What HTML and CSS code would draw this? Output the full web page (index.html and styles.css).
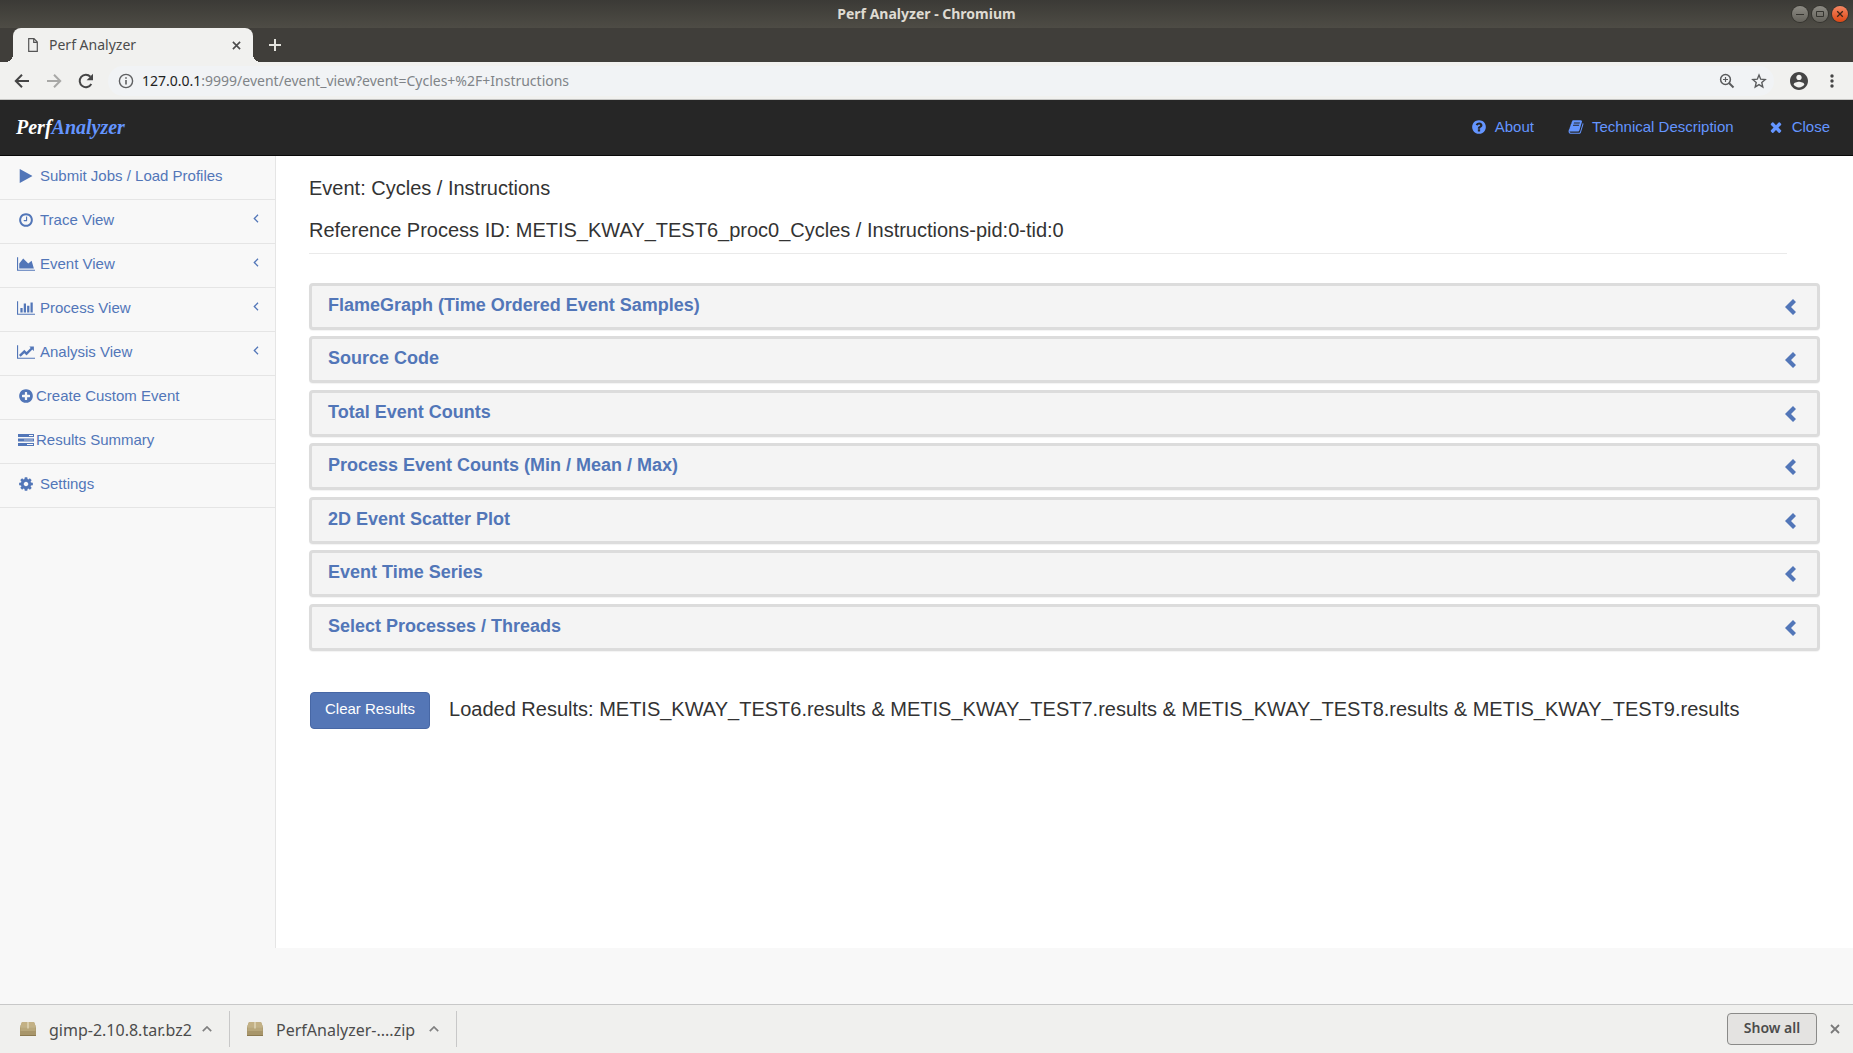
FILE: index.html
```html
<!DOCTYPE html>
<html lang="en">
<head>
<meta charset="utf-8">
<title>Perf Analyzer</title>
<link rel="stylesheet" href="styles.css">
</head>
<body>
<svg class="defs" aria-hidden="true">
  <symbol id="chevron" viewBox="0 0 11 16"><path d="M8 0l3 3-5 5 5 5-3 3-8-8z" fill="currentColor"/></symbol>
  <symbol id="angle" viewBox="0 0 6 9"><path d="M5 .7L1.300 4.500 5 8.300" fill="none" stroke="currentColor" stroke-width="1.300"/></symbol>
  <symbol id="up" viewBox="0 0 10 6"><path d="M.8 5.200L5 1l4.200 4.200" fill="none" stroke="currentColor" stroke-width="1.700"/></symbol>
  <symbol id="cross" viewBox="0 0 10 10"><path d="M1 1l8 8M9 1l-8 8" fill="none" stroke="currentColor" stroke-width="1.800"/></symbol>
  <symbol id="package" viewBox="0 0 16 14">
    <path d="M2 0h12l2 5v8.500q0 .5-.5.5h-15q-.5 0-.5-.5V5z" fill="#a8966a"/>
    <path d="M2 0h12l1.700 4.500H.3z" fill="#c3b185"/>
    <path d="M.5 5h15v4H.5z" fill="#b8a77b"/>
    <path d="M0 4.500h16v.8H0z" fill="#cdbf98"/>
    <path d="M7.300 0h1.400v6.500H7.300z" fill="#e2d8bb"/>
    <path d="M0 13h16v1H0z" fill="#8c7a50"/>
  </symbol>
</svg>

<header class="window-bar">
  <span class="window-title">Perf Analyzer - Chromium</span>
  <div class="window-buttons">
    <button class="win" aria-label="Minimize"><svg viewBox="0 0 16 16"><path d="M4 8.500h8" stroke="#35342f"/></svg></button>
    <button class="win" aria-label="Maximize"><svg viewBox="0 0 16 16"><path d="M4.500 5.500h7v5h-7z" fill="none" stroke="#35342f"/></svg></button>
    <button class="win win-close" aria-label="Close window"><svg viewBox="0 0 16 16"><path d="M5.200 5.200l5.600 5.600M10.800 5.200l-5.600 5.600" stroke="#3b2418" stroke-width="1.300"/></svg></button>
  </div>
</header>

<div class="tab-strip">
  <div class="tab">
    <svg class="tab-file" viewBox="0 0 10 14"><path d="M.7.7h5.300l3.300 3.300v9.300H.7zM5.700.7v3.600h3.600" fill="none" stroke="#555" stroke-width="1.200"/></svg>
    <span class="tab-title">Perf Analyzer</span>
    <button class="icon-button" aria-label="Close tab"><svg class="tab-x"><use href="#cross"/></svg></button>
  </div>
  <button class="icon-button new-tab" aria-label="New tab"><svg viewBox="0 0 12 12"><path d="M6 0v12M0 6h12" stroke="#e4e3dd" stroke-width="2"/></svg></button>
</div>

<div class="toolbar">
  <button class="icon-button" aria-label="Back"><svg class="i16" viewBox="0 0 16 16"><path d="M15 8H2M8 1.800L1.800 8 8 14.200" fill="none" stroke="#454545" stroke-width="2"/></svg></button>
  <button class="icon-button" aria-label="Forward"><svg class="i16" viewBox="0 0 16 16"><path d="M1 8H14M8 1.800L14.200 8 8 14.200" fill="none" stroke="#a8a8a6" stroke-width="2"/></svg></button>
  <button class="icon-button" aria-label="Reload"><svg class="i16" viewBox="0 0 16 16"><path d="M13.300 11A6.200 6.200 0 1 1 12.400 3.700" fill="none" stroke="#454545" stroke-width="2"/><path d="M15 .8v6.400H8.600z" fill="#454545"/></svg></button>
  <div class="address">
    <svg class="i16" viewBox="0 0 16 16"><circle cx="8" cy="8" r="6.600" fill="none" stroke="#5f6062" stroke-width="1.400"/><path d="M8 7v4.600M8 4.200v1.600" stroke="#5f6062" stroke-width="1.600"/></svg>
    <div class="url">
      <label for="url">127.0.0.1</label><input id="url" type="text" value=":9999/event/event_view?event=Cycles+%2F+Instructions">
    </div>
    <button class="icon-button" aria-label="Zoom"><svg class="i16" viewBox="0 0 16 16"><circle cx="6.500" cy="6.500" r="4.900" fill="none" stroke="#5a5b5d" stroke-width="1.500"/><path d="M10 10l4.500 4.500" stroke="#5a5b5d" stroke-width="2"/><path d="M6.500 4v5M4 6.500h5" stroke="#5a5b5d" stroke-width="1.200"/></svg></button>
    <button class="icon-button" aria-label="Bookmark"><svg class="i16" viewBox="0 0 16 16"><path d="M8 2l1.700 4.200 4.500.4-3.400 3 1 4.400L8 11.600 4.200 14l1-4.400-3.400-3 4.500-.4z" fill="none" stroke="#5a5b5d" stroke-width="1.400"/></svg></button>
  </div>
  <button class="icon-button account" aria-label="Profile"><svg viewBox="2 2 20 20"><path fill="#454545" d="M12 2C6.480 2 2 6.480 2 12s4.480 10 10 10 10-4.480 10-10S17.520 2 12 2zm0 3c1.660 0 3 1.340 3 3s-1.340 3-3 3-3-1.340-3-3 1.340-3 3-3zm0 14.200c-2.500 0-4.710-1.280-6-3.220.03-1.990 4-3.080 6-3.080 1.990 0 5.970 1.090 6 3.080-1.290 1.940-3.500 3.220-6 3.220z"/></svg></button>
  <button class="icon-button" aria-label="Menu"><svg class="i16" viewBox="0 0 16 16"><g fill="#454545"><circle cx="8" cy="3" r="1.700"/><circle cx="8" cy="8" r="1.700"/><circle cx="8" cy="13" r="1.700"/></g></svg></button>
</div>

<nav class="navbar">
  <a class="brand" href="#">Perf<span>Analyzer</span></a>
  <ul class="nav-links">
    <li><a href="#"><svg class="i16" viewBox="0 0 1792 1792"><path d="M1024 1376v-192q0-14-9-23t-23-9h-192q-14 0-23 9t-9 23v192q0 14 9 23t23 9h192q14 0 23-9t9-23zm256-672q0-88-55.500-163t-138.500-116-170-41q-243 0-371 213-15 24 8 42l132 100q7 6 19 6 16 0 25-12 53-68 86-92 34-24 86-24 48 0 85.500 26t37.500 59q0 38-20 61t-68 45q-63 28-115.500 86.500t-52.500 125.500v36q0 14 9 23t23 9h192q14 0 23-9t9-23q0-19 21.500-49.500t54.500-49.500q32-18 49-28.500t46-35 44.500-48 28-60.500 12.500-81zm384 192q0 209-103 385.500t-279.500 279.500-385.500 103-385.500-103-279.500-279.500-103-385.500 103-385.500 279.500-279.500 385.500-103 385.500 103 279.500 279.500 103 385.500z"/></svg>About</a></li>
    <li><a href="#"><svg class="i16" viewBox="0 0 1792 1792"><path d="M1703 478q40 57 18 129l-275 906q-19 64-76.500 107.500t-122.500 43.500h-923q-77 0-148.500-53.500t-99.500-131.500q-24-67-2-127 0-4 3-27t4-37q1-8-3-21.500t-3-19.500q2-11 8-21t16.500-23.500 16.500-23.500q23-38 45-91.500t30-91.500q3-10 .5-30t-.5-28q3-11 17-28t17-23q21-36 42-92t25-90q1-9-2.500-32t.5-28q4-13 22-30.500t22-22.500q19-26 42.500-84.500t27.500-96.500q1-8-3-25.500t-2-26.500q2-8 9-18t18-23 17-21q8-12 16.500-30.500t15-35 16-36 19.500-32 26.500-23.500 36-11.500 47.500 5.500l-1 3q38-9 51-9h761q74 0 114 56t18 130l-274 906q-36 119-71.500 153.500t-128.500 34.500h-869q-27 0-38 15-11 16-1 43 24 70 144 70h923q29 0 56-15.500t35-41.500l300-987q7-22 5-57 38 15 59 43zm-1064 2q-4 13 2 22.500t20 9.500h608q13 0 25.500-9.500t16.500-22.500l21-64q4-13-2-22.500t-20-9.500h-608q-13 0-25.500 9.500t-16.500 22.500zm-83 256q-4 13 2 22.500t20 9.500h608q13 0 25.500-9.500t16.500-22.500l21-64q4-13-2-22.500t-20-9.500h-608q-13 0-25.500 9.500t-16.500 22.500z"/></svg>Technical Description</a></li>
    <li><a href="#"><svg class="i16" viewBox="0 0 1792 1792"><path d="M1490 1322q0 40-28 68l-136 136q-28 28-68 28t-68-28l-294-294-294 294q-28 28-68 28t-68-28l-136-136q-28-28-28-68t28-68l294-294-294-294q-28-28-28-68t28-68l136-136q28-28 68-28t68 28l294 294 294-294q28-28 68-28t68 28l136 136q28 28 28 68t-28 68l-294 294 294 294q28 28 28 68z"/></svg>Close</a></li>
  </ul>
</nav>

<div class="page">
  <nav class="sidebar">
    <ul>
      <li><a href="#"><span class="fw"><svg class="i16" viewBox="0 0 1792 1792"><path d="M1576 927l-1328 738q-23 13-39.500 3t-16.500-36v-1472q0-26 16.500-36t39.500 3l1328 738q23 13 23 31t-23 31z"/></svg></span>Submit Jobs / Load Profiles</a></li>
      <li><a href="#"><span class="fw"><svg class="i16" viewBox="0 0 1792 1792"><path d="M1024 544v448q0 14-9 23t-23 9h-320q-14 0-23-9t-9-23v-64q0-14 9-23t23-9h224v-352q0-14 9-23t23-9h64q14 0 23 9t9 23zm416 352q0-148-73-273t-198-198-273-73-273 73-198 198-73 273 73 273 198 198 273 73 273-73 198-198 73-273zm224 0q0 209-103 385.500t-279.500 279.500-385.500 103-385.500-103-279.500-279.500-103-385.500 103-385.500 279.500-279.500 385.500-103 385.500 103 279.500 279.500 103 385.500z"/></svg></span>Trace View<svg class="angle"><use href="#angle"/></svg></a></li>
      <li><a href="#"><span class="fw"><svg class="chart" viewBox="0 0 2048 1792"><path d="M2048 1536v128h-2048v-1536h128v1408h1920zm-384-1024l256 896h-1664v-576l448-576 576 576z"/></svg></span>Event View<svg class="angle"><use href="#angle"/></svg></a></li>
      <li><a href="#"><span class="fw"><svg class="chart" viewBox="0 0 2048 1792"><path d="M640 896v512h-256v-512h256zm384-512v1024h-256v-1024h256zm1024 1152v128h-2048v-1536h128v1408h1920zm-640-896v768h-256v-768h256zm384-384v1152h-256v-1152h256z"/></svg></span>Process View<svg class="angle"><use href="#angle"/></svg></a></li>
      <li><a href="#"><span class="fw"><svg class="chart" viewBox="0 0 2048 1792"><path d="M2048 1536v128h-2048v-1536h128v1408h1920zm-128-1248v435q0 21-19.500 29.500t-35.500-7.500l-121-121-633 633q-10 10-23 10t-23-10l-233-233-416 416-192-192 585-585q10-10 23-10t23 10l233 233 464-464-121-121q-16-16-7.500-35.500t29.500-19.500h435q14 0 23 9t9 23z"/></svg></span>Analysis View<svg class="angle"><use href="#angle"/></svg></a></li>
      <li><a class="tight" href="#"><span class="fw"><svg class="i16" viewBox="0 0 1792 1792"><path d="M1344 960v-128q0-26-19-45t-45-19h-256v-256q0-26-19-45t-45-19h-128q-26 0-45 19t-19 45v256h-256q-26 0-45 19t-19 45v128q0 26 19 45t45 19h256v256q0 26 19 45t45 19h128q26 0 45-19t19-45v-256h256q26 0 45-19t19-45zm320-64q0 209-103 385.500t-279.500 279.500-385.500 103-385.500-103-279.500-279.500-103-385.500 103-385.500 279.500-279.500 385.500-103 385.500 103 279.500 279.500 103 385.500z"/></svg></span>Create Custom Event</a></li>
      <li><a class="tight" href="#"><span class="fw"><svg class="i16" viewBox="0 0 16 16"><path d="M0 2h16v3H0zM0 6.500h16v3H0zM0 11h16v3H0z"/><path d="M11 3h4v1h-4zM9 12h6v1H9z" fill="#f8f8f8"/><path d="M6 7.500h9v1H6z" fill="#b4c3e0"/></svg></span>Results Summary</a></li>
      <li><a href="#"><span class="fw"><svg class="i16" viewBox="0 0 1792 1792"><path d="M1152 896q0-106-75-181t-181-75-181 75-75 181 75 181 181 75 181-75 75-181zm512-109v222q0 12-8 23t-20 13l-185 28q-19 54-39 91 35 50 107 138 10 12 10 25t-9 23q-27 37-99 108t-94 71q-12 0-26-9l-138-108q-44 23-91 38-16 136-29 186-7 28-36 28h-222q-14 0-24.500-8.500t-11.500-21.500l-28-184q-49-16-90-37l-141 107q-10 9-25 9-14 0-25-11-126-114-165-168-7-10-7-23 0-12 8-23 15-21 51-66.500t54-70.500q-27-50-41-99l-183-27q-13-2-21-12.500t-8-23.500v-222q0-12 8-23t19-13l186-28q14-46 39-92-40-57-107-138-10-12-10-24 0-10 9-23 26-36 98.500-107.500t94.500-71.500q13 0 26 10l138 107q44-23 91-38 16-136 29-186 7-28 36-28h222q14 0 24.500 8.500t11.500 21.500l28 184q49 16 90 37l142-107q9-9 24-9 13 0 25 10 129 119 165 170 7 8 7 22 0 12-8 23-15 21-51 66.500t-54 70.500q26 50 41 98l183 28q13 2 21 12.500t8 23.500z"/></svg></span>Settings</a></li>
    </ul>
  </nav>

  <main class="content">
    <div class="page-heading">
      <h4>Event: Cycles / Instructions</h4>
      <h4>Reference Process ID: METIS_KWAY_TEST6_proc0_Cycles / Instructions-pid:0-tid:0</h4>
    </div>
    <div class="panels">
      <button class="panel"><span>FlameGraph (Time Ordered Event Samples)</span><svg><use href="#chevron"/></svg></button>
      <button class="panel"><span>Source Code</span><svg><use href="#chevron"/></svg></button>
      <button class="panel"><span>Total Event Counts</span><svg><use href="#chevron"/></svg></button>
      <button class="panel"><span>Process Event Counts (Min / Mean / Max)</span><svg><use href="#chevron"/></svg></button>
      <button class="panel"><span>2D Event Scatter Plot</span><svg><use href="#chevron"/></svg></button>
      <button class="panel"><span>Event Time Series</span><svg><use href="#chevron"/></svg></button>
      <button class="panel"><span>Select Processes / Threads</span><svg><use href="#chevron"/></svg></button>
    </div>
    <div class="results">
      <button class="clear">Clear Results</button>
      <h4>Loaded Results: METIS_KWAY_TEST6.results &amp; METIS_KWAY_TEST7.results &amp; METIS_KWAY_TEST8.results &amp; METIS_KWAY_TEST9.results</h4>
    </div>
  </main>
</div>

<footer class="downloads">
  <div class="download"><svg class="package"><use href="#package"/></svg><span>gimp-2.10.8.tar.bz2</span><button class="icon-button" aria-label="Options for gimp"><svg class="up"><use href="#up"/></svg></button></div>
  <div class="download"><svg class="package"><use href="#package"/></svg><span>PerfAnalyzer-....zip</span><button class="icon-button" aria-label="Options for PerfAnalyzer"><svg class="up"><use href="#up"/></svg></button></div>
  <button class="show-all">Show all</button>
  <button class="icon-button" aria-label="Close downloads"><svg class="bar-x"><use href="#cross"/></svg></button>
</footer>
</body>
</html>
```

FILE: styles.css
```css
* { box-sizing: border-box; }

body {
  margin: 0;
  min-height: 100vh;
  display: flex;
  flex-direction: column;
  background: #f8f8f8;
  color: #333;
  font: 15px/22px "Liberation Sans", Arial, sans-serif;
}

ul { list-style: none; margin: 0; padding: 0; }
a { color: inherit; text-decoration: none; }
button { font: inherit; cursor: pointer; }
svg { display: block; flex: none; fill: currentColor; }
.defs { position: absolute; width: 0; height: 0; }
.i16 { width: 16px; height: 16px; }

.icon-button {
  display: flex;
  padding: 0;
  border: 0;
  background: none;
  color: inherit;
}

/* Window frame */
.window-bar {
  display: grid;
  grid-template-columns: 1fr auto 1fr;
  align-items: center;
  height: 28px;
  padding: 0 5px;
  background: linear-gradient(#3b3a36, #4e4c45);
  color: #dfdbd2;
  font: bold 14px/20px "Noto Sans", sans-serif;
}
.window-title { grid-column: 2; }
.window-buttons { display: flex; justify-content: flex-end; gap: 4px; }
.win {
  width: 16px;
  height: 16px;
  padding: 0;
  border: 0;
  border-radius: 50%;
  background: linear-gradient(#8d8b84, #64625b);
  box-shadow: 0 0 0 1px #35342f;
}
.win-close { background: linear-gradient(#f58763, #dc4714); }

.tab-strip {
  display: flex;
  align-items: center;
  height: 34px;
  padding-left: 13px;
  background: #403e3a;
  color: #4c4c4c;
  font: 14px/20px "Noto Sans", sans-serif;
}
.tab {
  position: relative;
  display: flex;
  align-items: center;
  width: 240px;
  height: 34px;
  padding: 0 12px 0 15px;
  border-radius: 8px 8px 0 0;
  background: #f1f1ef;
}
.tab::before, .tab::after {
  content: "";
  position: absolute;
  bottom: 0;
  width: 8px;
  height: 8px;
}
.tab::before { right: 100%; background: radial-gradient(circle at 0 0, transparent 8px, #f1f1ef 8px); }
.tab::after { left: 100%; background: radial-gradient(circle at 100% 0, transparent 8px, #f1f1ef 8px); }
.tab-file { width: 10px; height: 14px; }
.tab-title { flex: 1; margin-left: 11px; }
.tab-x { width: 9px; height: 9px; }
.new-tab { margin-left: 16px; }
.new-tab svg { width: 12px; height: 12px; }

.toolbar {
  display: flex;
  align-items: center;
  gap: 16px;
  height: 38px;
  padding: 0 13px 0 14px;
  border-bottom: 1px solid #c4c4c2;
  background: #f1f1ef;
}
.address {
  flex: 1;
  display: flex;
  align-items: center;
  gap: 16px;
  height: 30px;
  margin-left: -2px;
  padding: 0 7px 0 10px;
  border-radius: 15px;
  background: #f1f3f5;
}
.url {
  flex: 1;
  display: flex;
  margin-left: -8px;
  color: #222;
  font: 14px/20px "Noto Sans", sans-serif;
}
.url input {
  flex: 1;
  min-width: 0;
  padding: 0;
  border: 0;
  outline: 0;
  background: none;
  color: #808488;
  font: inherit;
}
.account svg { width: 18px; height: 18px; }

/* Application header */
.navbar {
  display: flex;
  align-items: center;
  justify-content: space-between;
  height: 56px;
  padding: 0 23px 2px 16px;
  border-bottom: 1px solid #080808;
  background: #262626;
  color: #6495ff;
}
.brand {
  color: #fff;
  font: italic bold 20px/22px "Liberation Serif", "Times New Roman", serif;
}
.brand span { color: #6495ff; }
.nav-links { display: flex; gap: 34px; }
.nav-links a { display: flex; align-items: center; gap: 8px; }

/* Page body */
.page {
  flex: 1;
  display: flex;
  margin-bottom: 56px;
}
.sidebar { width: 275px; flex: none; color: #5276b8; }
.sidebar li { border-bottom: 1px solid #e5e5e5; }
.sidebar a {
  display: flex;
  align-items: center;
  gap: 4px;
  padding: 9px 16px 12px;
}
.sidebar .tight { gap: 0; }
.fw { display: flex; justify-content: center; width: 20px; }
.chart { width: 18px; height: 16px; }
.angle { width: 6px; height: 9px; margin: 0 0 4px auto; }

.content {
  flex: 1;
  padding: 21px 33px 40px;
  border-left: 1px solid #e5e5e5;
  background: #fff;
}
h4 { margin: 0; font-weight: 400; font-size: 20px; line-height: 22px; }
.page-heading {
  display: grid;
  gap: 20px;
  margin: 0 33px 29px 0;
  padding-bottom: 12px;
  border-bottom: 1px solid #eaeaea;
}
.panel {
  display: flex;
  align-items: center;
  justify-content: space-between;
  width: 100%;
  height: 47px;
  margin-bottom: 6px;
  padding: 0 21px 0 16px;
  border: 3px solid #dcdcdc;
  border-radius: 4px;
  background: #f4f4f4;
  box-shadow: 0 1px 1px rgba(0, 0, 0, 0.05);
  color: #5276b8;
  font-size: 18px;
  font-weight: 700;
}
.panel:nth-child(even) { margin-bottom: 7px; }
.panel span { padding-bottom: 3px; }
.panel svg { width: 11px; height: 16px; }

.results {
  display: flex;
  align-items: center;
  gap: 19px;
  margin-top: 41px;
}
.results h4 { padding-bottom: 4px; }
.clear {
  height: 37px;
  margin-left: 1px;
  padding: 0 14px 4px;
  border: 1px solid #4767a5;
  border-radius: 4px;
  background: #5476b6;
  color: #fff;
}

/* Download shelf */
.downloads {
  display: flex;
  align-items: center;
  height: 49px;
  padding: 0 13px 0 3px;
  border-top: 1px solid #c8c8c8;
  background: #f0f0ee;
  color: #4c4c4c;
  font: 16px/22px "Noto Sans", sans-serif;
}
.download {
  display: flex;
  align-items: center;
  width: 227px;
  height: 36px;
  padding: 0 17px;
  border-right: 1px solid #c8c8c8;
}
.package { width: 16px; height: 14px; margin-right: 13px; }
.download span { flex: 1; padding-top: 2px; }
.up { width: 10px; height: 6px; color: #808080; }
.show-all {
  width: 90px;
  height: 32px;
  margin: 0 13px 0 auto;
  padding: 0 0 2px;
  border: 1px solid #8a8a88;
  border-radius: 4px;
  background: #e4e3e1;
  color: #4c4c4c;
  font-weight: 600;
  font-size: 14px;
}
.bar-x { width: 10px; height: 10px; color: #7a7a7a; }
```
